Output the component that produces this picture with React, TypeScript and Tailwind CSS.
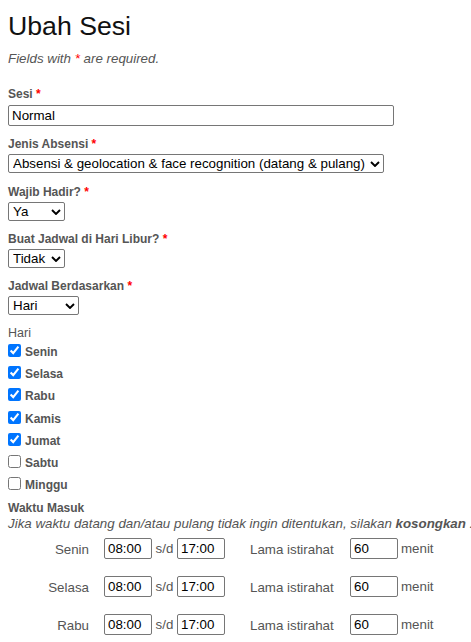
import React from 'react';

const Req = () => <span className="text-[#ff0000]">*</span>;

const Chevron = () => (
  <svg
    className="pointer-events-none absolute right-[4px] top-[6.5px]"
    width="10"
    height="6"
    viewBox="0 0 10 6"
    fill="none"
  >
    <path d="M1 1L5 5L9 1" stroke="#000" strokeWidth="1.9" />
  </svg>
);

const Select = ({ className, options }: { className: string; options: string[] }) => (
  <div className={`relative ${className}`}>
    <select className="block h-[19px] w-full appearance-none rounded-[2px] border border-[#767676] bg-white pl-[4px] pr-[16px] text-[13.33px] leading-[17px] text-black outline-none">
      {options.map((o) => (
        <option key={o}>{o}</option>
      ))}
    </select>
    <Chevron />
  </div>
);

const TimeInput = ({ value }: { value: string }) => (
  <input
    type="text"
    defaultValue={value}
    className="block h-[21px] w-[48px] rounded-[2px] border border-[#767676] bg-white px-[3px] text-[13.33px] text-black outline-none"
  />
);

const days = [
  { name: 'Senin', checked: true },
  { name: 'Selasa', checked: true },
  { name: 'Rabu', checked: true },
  { name: 'Kamis', checked: true },
  { name: 'Jumat', checked: true },
  { name: 'Sabtu', checked: false },
  { name: 'Minggu', checked: false },
];

export default function App() {
  return (
    <div className="h-[642px] w-[471px] overflow-hidden bg-white px-[8px] font-['Liberation_Sans',Arial,sans-serif] text-[13.33px] text-[#555]">
      <div className="flex flex-col">
        <h1 className="mt-[13px] text-[26.67px] font-normal leading-[27px] text-[#111]">Ubah Sesi</h1>
        <p className="mt-[11px] italic leading-[16px]">
          Fields with <Req /> are required.
        </p>

        {/* Sesi */}
        <label className="mt-[20px] text-[12px] font-bold leading-[14px]">
          Sesi <Req />
        </label>
        <input
          type="text"
          defaultValue="Normal"
          className="mt-[4px] block h-[21px] w-[386px] rounded-[2px] border border-[#767676] bg-white px-[3px] text-[13.33px] text-black outline-none"
        />

        <label className="mt-[11px] text-[12px] font-bold leading-[14px]">
          Jenis Absensi <Req />
        </label>
        <Select
          className="mt-[3px] w-[376px]"
          options={['Absensi & geolocation & face recognition (datang & pulang)']}
        />

        <label className="mt-[12px] text-[12px] font-bold leading-[14px]">
          Wajib Hadir? <Req />
        </label>
        <Select className="mt-[3px] w-[57px]" options={['Ya', 'Tidak']} />

        <label className="mt-[11px] text-[12px] font-bold leading-[14px]">
          Buat Jadwal di Hari Libur? <Req />
        </label>
        <Select className="mt-[3px] w-[57px]" options={['Tidak', 'Ya']} />

        <label className="mt-[11px] text-[12px] font-bold leading-[14px]">
          Jadwal Berdasarkan <Req />
        </label>
        <Select className="mt-[3px] w-[71px]" options={['Hari', 'Tanggal']} />

        <div className="mt-[11px] text-[12.5px] leading-[14px]">Hari</div>
        <div className="mt-[1px] flex flex-col">
          {days.map((d) => (
            <div key={d.name} className="flex h-[22.2px] items-start">
              <input
                type="checkbox"
                defaultChecked={d.checked}
                className="m-0 mt-[3px] h-[13px] w-[13px] shrink-0"
              />
              <span className="ml-[4px] mt-[4px] text-[12px] font-bold leading-[14px]">{d.name}</span>
            </div>
          ))}
        </div>

        <div className="mt-[4.5px] text-[12px] font-bold leading-[15px]">Waktu Masuk</div>
        <p className="whitespace-nowrap italic leading-[16px]">
          Jika waktu datang dan/atau pulang tidak ingin ditentukan, silakan <b>kosongkan</b> .
        </p>

        {/* jadwal per hari (tiga baris pertama yang terlihat) */}
        <div className="mt-[6.5px] flex flex-col">
          {days.slice(0, 3).map((d) => (
            <div key={d.name} className="flex h-[38px] items-start">
              <div className="mt-[3.7px] w-[81px] text-right leading-[16px]">{d.name}</div>
              <div className="ml-[15px] flex items-center">
                <TimeInput value="08:00" />
                <span className="mx-[3.6px] leading-[16px]">s/d</span>
                <TimeInput value="17:00" />
              </div>
              <div className="ml-[25px] mt-[3.7px] w-[100px] leading-[16px]">Lama istirahat</div>
              <div className="flex items-center">
                <input
                  type="text"
                  defaultValue="60"
                  className="block h-[21px] w-[48px] rounded-[2px] border border-[#767676] bg-white px-[3px] text-[13.33px] text-black outline-none"
                />
                <span className="ml-[3px] leading-[16px]">menit</span>
              </div>
            </div>
          ))}
        </div>
      </div>
    </div>
  );
}
